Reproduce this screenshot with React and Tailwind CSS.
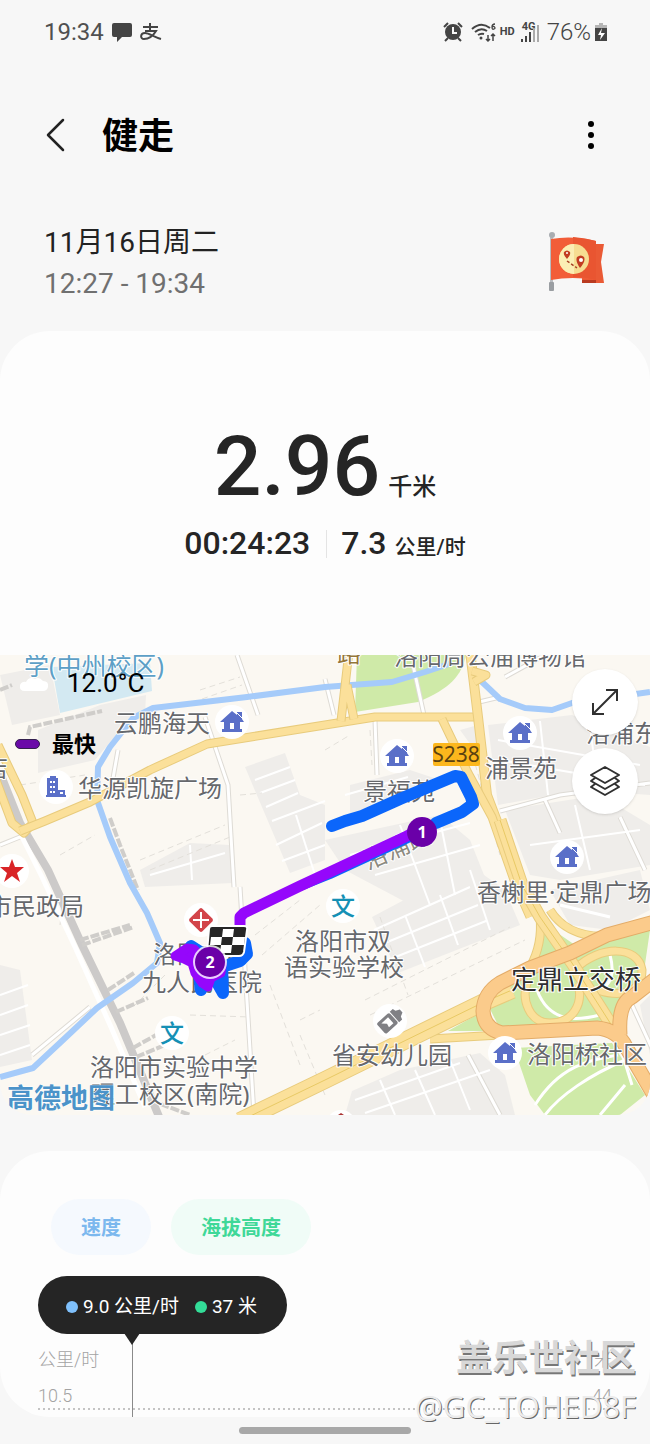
import { Fragment } from 'react';

const FONT = "font-['Roboto','Noto_Sans_CJK_SC',sans-serif]";
const MAP_FONT = "font-['Noto_Sans','Noto_Sans_CJK_SC',sans-serif]";

// points are in the map's own 650x460 space
const homes = [
  [232, 67],
  [397, 101],
  [520, 78],
  [567, 202],
  [505, 398],
];

const labels = [
  { text: '洛阳周公庙博物馆', x: 394, y: 10 },
  { text: '云鹏海天', x: 114, y: 77 },
  { text: '华源凯旋广场', x: 78, y: 142 },
  { text: '景福苑', x: 363, y: 145 },
  { text: '浦景苑', x: 485, y: 122 },
  { text: '洛浦东', x: 586, y: 87 },
  { text: '香榭里·定鼎广场', x: 477, y: 246 },
  { text: '市民政局', x: -12, y: 260 },
  { text: '洛阳市双', x: 295, y: 295 },
  { text: '语实验学校', x: 284, y: 321 },
  { text: '洛阳市第', x: 153, y: 308 },
  { text: '九人民医院', x: 142, y: 336 },
  { text: '省安幼儿园', x: 332, y: 409 },
  { text: '洛阳桥社区', x: 527, y: 408 },
  { text: '洛阳市实验中学', x: 90, y: 421 },
  { text: '理工校区(南院)', x: 91, y: 448 },
];

const roads = [
  { d: 'M-2 90 L22 140 L33 168 L24 178 L12 168 L-4 125', w: 7 },
  { d: 'M20 176 L45 166 L90 147 L150 115 L207 89 L325 70 L375 62 L478 62', w: 7 },
  { d: 'M349 -4 L341 66 M347 30 L354 64', w: 7 },
  { d: 'M470 -4 L478 62 L487 140 L506 190 L530 245', w: 8 },
  { d: 'M442 64 L468 118 L492 162 L515 228 L530 262', w: 7 },
  { d: 'M472 16 L486 20 L474 27', w: 7 },
  { d: 'M430 384 L500 380', w: 7 },
  { d: 'M528 325 C520 345 530 368 550 368 C572 368 584 350 578 328', w: 7 },
  { d: 'M575 314 C600 290 638 290 642 315 C642 340 618 342 598 335', w: 7 },
  { d: 'M540 262 C542 282 538 298 530 312', w: 7 },
  { d: 'M550 255 C564 278 590 284 618 280', w: 7 },
  { d: 'M240 466 L325 425 L392 392 L482 348 L512 335', w: 16, center: true },
  { d: 'M500 165 L522 230 L540 262 L572 308 L614 374', w: 11, center: true },
];

const highway = 'M655 267 L607 280 L570 298 L530 313 L500 328 Q484 338 483 356 Q484 374 502 378 L597 373 Q618 375 626 392 L655 442 M620 380 Q618 348 632 342 L655 324';

const streets = 'M237 0 L258 60 M205 62 L228 130 L234 232 M413 10 L424 60 M375 65 L377 120 M475 48 L500 42 M505 22 L545 0 M325 24 L334 60 M500 156 L560 140 L650 128 M545 145 L560 178 M620 162 L645 215 M110 140 L118 95 M0 190 L25 180 M240 232 L254 460 M32 400 L90 352 M468 400 L500 460 M632 350 L655 400';

const blocks = [
  'M0 20 L50 10 L60 60 L12 70 Z',
  'M38 75 L100 50 L146 40 L145 60 L112 85 L95 105 L38 118 Z',
  'M245 112 L285 98 L300 140 L325 150 L325 205 L290 218 Z',
  'M140 215 L190 188 L230 190 L233 228 L145 232 Z',
  'M460 75 L478 70 L484 108 Z',
  'M488 70 L572 60 L650 92 L650 140 L580 135 L498 150 Z',
  'M350 130 L410 115 L440 125 L350 165 Z',
  'M325 185 L440 160 L470 185 L490 235 L430 260 L345 215 Z',
  'M505 155 L600 140 L650 170 L650 210 L560 225 L530 220 Z',
  'M372 262 L470 210 L505 235 L520 270 L398 318 Z',
  'M0 310 L20 315 L32 405 L0 412 Z',
  'M352 436 L400 415 L480 398 L505 420 L515 460 L345 460 Z',
  'M550 235 L640 215 L650 255 L610 275 L570 270 Z',
  'M640 350 L650 340 V400 Z',
];

function HomePin({ x, y }) {
  return (
    <g transform={`translate(${x} ${y})`}>
      <circle r="17" fill="#fff" />
      <path d="M0 -11 L5 -7 V-10 H10 V-3 L12 0 H8 V7 H10 V10 H-10 V7 H-8 V0 H-12 Z" fill="#5a6fc8" />
      <path d="M-2 1 H2 V7 H-2 Z" fill="#fff" />
      <path d="M4 -10 L10 -4" stroke="#fff" />
    </g>
  );
}

function SchoolPin({ x, y }) {
  return (
    <g transform={`translate(${x} ${y})`}>
      <circle r="17" fill="#fff" />
      <text y="9" textAnchor="middle" className="text-2xl font-medium" fill="#1590b5">文</text>
    </g>
  );
}

function Badge({ x, y, n }) {
  return (
    <g transform={`translate(${x} ${y})`}>
      <circle r="15" fill="#6a00a8" />
      <text y="6" textAnchor="middle" className="font-['Open_Sans',sans-serif] text-base font-bold" fill="#fff">{n}</text>
    </g>
  );
}

function RouteMap() {
  return (
    <svg
      viewBox="0 0 650 460"
      preserveAspectRatio="xMidYMid slice"
      className={`block h-[460px] w-full ${MAP_FONT}`}
      role="img"
      aria-label="路线地图"
    >
      <rect width="650" height="460" fill="#fbf8f2" />

      {/* blocks and parks */}
      <path d="M52 12 L150 8 L152 36 L60 58 Z" fill="#d3e9f2" />
      {blocks.map((d) => <path key={d} d={d} fill="#efedea" />)}
      <g fill="#cfeaa8">
        <path d="M357 0 H466 C462 20 450 34 418 47 L355 57 Z" />
        <path d="M514 393 L612 388 L645 440 L620 460 H545 L530 440 Z" />
        <path d="M532 310 L546 270 L575 290 L610 280 L650 275 L642 330 L622 345 L616 370 L500 374 L488 350 Z" />
        <path d="M448 376 L480 358 L488 376 Z" />
      </g>

      {/* minor streets */}
      <path d={streets} fill="none" stroke="#dedbd5" strokeWidth="5" />
      <g fill="none" stroke="#fff" strokeWidth="3">
        <path d={streets} />
        <path d="M535 450 C560 410 590 405 618 400 M545 460 C560 440 590 420 625 405 M600 460 L625 430 M537 335 C550 370 580 365 600 360 M560 250 L610 262 M610 300 C618 330 600 340 590 330 M618 385 L632 430" />
      </g>
      <g fill="none" stroke="#fff" strokeWidth="2">
        <path d="M255 125 L290 112 M260 138 L295 125 M266 152 L298 138 M272 166 L325 146 M276 190 L322 168 M282 206 L325 190 M296 160 L315 220" />
        <path d="M150 220 L225 198 M190 190 L192 225 M345 140 L408 122 M350 200 L470 168 M375 220 L480 190 M400 170 L430 250 M440 165 L455 240" />
        <path d="M374 275 L470 232 M380 290 L478 250 M388 305 L486 266 M405 260 L425 312 M440 240 L458 290 M470 215 L490 275" />
        <path d="M498 85 L640 110 M500 105 L645 130 M540 66 L548 140 M590 72 L598 132 M530 190 L640 175 M575 150 L590 215 M355 445 L460 408 M365 458 L490 415 M380 425 L395 460 M415 415 L435 460 M450 405 L470 455" />
        <path d="M0 340 L28 330 M0 360 L28 350 M0 380 L30 370 M0 400 L30 390" />
      </g>
      <g fill="none" stroke="#e3e0da" strokeDasharray="6 4">
        <path d="M200 35 L240 22 M202 44 L242 30 M20 130 L85 120 M60 200 L95 180 M140 205 L225 170 M150 215 L230 182 M240 140 L262 138 M190 360 L250 362 M60 270 L62 250 M365 345 L510 272 M370 360 L525 285 M255 280 L300 245 M262 300 L320 250 M300 365 L320 355 M165 320 L135 350 M325 95 L350 80 M370 75 L372 110" />
        <path d="M380 262 L408 340 M470 90 L500 200 M270 330 L300 410 M205 400 L235 385 M300 380 L325 440" />
      </g>

      {/* railway with its sidings */}
      <path d="M0 118 L20 168 L48 215 L82 290 L120 368 L160 464" fill="none" stroke="#cccac9" strokeWidth="8" />
      <path d="M22 182 L42 222 L75 292 L111 372 L145 452" fill="none" stroke="#fff" strokeWidth="5" />
      <g fill="none" stroke="#cfcdca" strokeWidth="4" strokeDasharray="9 2">
        <path d="M28 80 L30 72 L102 56" />
        <path d="M110 163 L120 190 L138 235" />
        <path d="M82 290 L134 272 M80 285 L130 270" />
        <path d="M108 335 L134 318 M116 357 L148 343 M133 393 L156 380 M136 402 L165 390" />
        <path d="M0 35 L12 30 M150 445 L190 460" />
      </g>

      {/* river */}
      <g fill="none" stroke="#a5cbfa" strokeWidth="6" strokeLinejoin="round">
        <path d="M452 8 L425 17 L392 27 L325 32 L247 42 L153 53 L133 63 L110 92 L98 112 L97 145 L110 182 L130 228 L147 258 L160 288 L157 308 L133 328 L97 353 L63 385 L33 413 L0 422" />
        <path d="M481 26 L500 44 L525 53 L552 55 L572 48 L650 37" />
      </g>

      {/* main roads */}
      <g fill="none" strokeLinejoin="round">
        {roads.map(({ d, w, center }) => (
          <Fragment key={d}>
            <path d={d} stroke="#e8cb7c" strokeWidth={w + 2} />
            <path d={d} stroke="#fbe09a" strokeWidth={w} />
            {center && <path d={d} stroke="#e8c965" />}
          </Fragment>
        ))}
        <path d={highway} stroke="#e3ac68" strokeWidth="15" />
        <path d={highway} stroke="#fbcb8b" strokeWidth="13" />
      </g>

      {/* place names */}
      <g className="text-2xl" fill="#66686c" stroke="#fff" strokeWidth="2" strokeLinejoin="round" paintOrder="stroke">
        {labels.map(({ text, x, y }) => <text key={text} x={x} y={y}>{text}</text>)}
        <text x="24" y="20" className="text-[25px]" fill="#5d9fc6">学(中州校区)</text>
        <text x="337" y="7" fill="#94763a">路</text>
        <text transform="translate(368 215) rotate(-24)" fill="#8c8a80">洛浦路</text>
        <text x="-16" y="122">店</text>
      </g>
      <text x="511" y="334" className="text-[26px]" fill="#2e2e30" stroke="#fff" strokeWidth="2" paintOrder="stroke">定鼎立交桥</text>
      <rect x="433" y="88" width="47" height="23" rx="2" fill="#fcb71d" />
      <text x="456" y="107" textAnchor="middle" className="text-[21px]" fill="#5c4210">S238</text>

      {/* pins */}
      {homes.map(([x, y]) => <HomePin key={x} x={x} y={y} />)}
      <SchoolPin x={343} y={251} />
      <SchoolPin x={172} y={378} />
      <g transform="translate(56 132)">
        <circle r="17" fill="#fff" />
        <path d="M-9 -9 H-6 V-11 H0 V-9 H2 V3 H9 V8 H10 V10 H-10 V8 H-9 Z" fill="#5a6fc8" />
        <path d="M-6 -5 H-4 M-3 -5 H-1 M-6 0 H-4 M-3 0 H-1 M-6 5 H-4 M-3 5 H-1 M4 6 H7" stroke="#fff" strokeWidth="2" />
      </g>
      <g transform="translate(12 216)">
        <circle r="17" fill="#fff" />
        <path d="M0 -12 L3 -4 L12 -4 L5 2 L8 11 L0 5 L-8 11 L-5 2 L-12 -4 L-3 -4 Z" fill="#d92427" />
      </g>
      <g transform="translate(201 265)">
        <circle r="17" fill="#fff" />
        <rect x="-9" y="-9" width="18" height="18" rx="2" transform="rotate(45)" fill="#d2444a" />
        <path d="M-8 0 H8 M0 -8 V8" stroke="#fff" strokeWidth="2" />
      </g>
      <g transform="translate(390 366)">
        <circle r="17" fill="#fff" />
        <g transform="rotate(48)">
          <rect x="-7" y="-5" width="14" height="17" rx="2" fill="#808084" />
          <path d="M-7 -6 H7 V-10 L4 -11 L2 -15 H-2 L-4 -11 L-7 -10 Z" fill="#808084" />
          <path d="M-4 -1 H4 V5 L0 4 L-4 8 Z" fill="#fff" />
        </g>
      </g>
      <circle cx="341" cy="470" r="15" fill="#fff" />
      <path d="M338 460 L341 458 L344 460 Z" fill="#a33" />

      {/* recorded route, fastest part in purple */}
      <g fill="none" strokeLinecap="round" strokeLinejoin="round">
        <g stroke="#0b66fb" strokeWidth="12">
          <path d="M332 171 L345 166 L362 161 L400 144 L455 121 L461 122 L471 142 L473 149 L462 157 L436 168" />
          <path d="M410 183 L330 220 L300 232" strokeWidth="8" />
          <path d="M245 288 L247 299 L240 306 L222 312" strokeWidth="12" />
          <path d="M191 291 L205 300 M222 312 L223 338 L214 322 M199 320 L201 335" strokeWidth="12" />
        </g>
        <path d="M240 275 V262 L244 258 L300 231 L330 217 L375 196 L405 182 L416 176" stroke="#9507fb" strokeWidth="11" />
        <path d="M175 301 L181 297 L187 293 L194 294 L200 300 L222 310 L221 318 L211 323 L208 332 L202 328 L195 318 L192 308 L184 304 Z" fill="#9507fb" stroke="#9507fb" strokeWidth="9" />
      </g>
      <g transform="translate(227 286)">
        <path d="M-15 -15 H17 Q21 -15 20 -11 L17 11 Q16 15 12 15 H-18 Q-21 15 -20 11 L-18 -12 Q-18 -15 -15 -15 Z" fill="#262626" stroke="#fff" strokeWidth="2" />
        <path d="M-4 -12 H7 L6 -4 H-5 Z M-16 -4 H-5 L-6 4 H-17 Z M6 -4 H18 L17 4 H5 Z M-6 4 H5 L4 12 H-7 Z" fill="#fff" />
      </g>
      <circle cx="210" cy="307" r="17" fill="#fff" opacity="0.8" />
      <Badge x={422} y={177} n="1" />
      <Badge x={210} y={307} n="2" />

      <text x="7" y="453" className="text-[27px] font-bold" fill="#4b93c9" stroke="#fff" strokeWidth="1" paintOrder="stroke">高德地图</text>
    </svg>
  );
}

function StatusBar() {
  return (
    <div className="flex h-16 items-center justify-between pr-[43px] pl-11 text-2xl leading-6 font-light text-[#444]">
      <div className="flex items-center gap-2">
        <span className="font-normal text-[#505050]">19:34</span>
        <svg width="20" height="20" viewBox="0 0 20 20" fill="#444" aria-hidden="true">
          <path d="M2 1 H18 Q20 1 20 3 V13 Q20 15 18 15 H10 L5 20 V15 H2 Q0 15 0 13 V3 Q0 1 2 1 Z" />
        </svg>
        <svg width="22" height="18" viewBox="0 0 22 18" fill="none" stroke="#444" strokeWidth="2" aria-hidden="true">
          <path d="M3 4 H18 M10 0 V8 M5 8 H16 C13 13 8 16 4 16 C0 16 0 10 5 10 C9 10 14 14 21 16" />
        </svg>
      </div>
      <div className="flex items-center gap-1">
        <svg width="20" height="20" viewBox="0 0 20 20" fill="none" stroke="#444" strokeWidth="2" className="mr-1" aria-hidden="true">
          <circle cx="10" cy="10" r="8" fill="#444" stroke="none" />
          <path d="M1 5 L5 1 M19 5 L15 1 M5 16 L2 19 M15 16 L18 19" />
          <path d="M10 5 V11 H14" stroke="#f7f7f7" />
        </svg>
        <svg width="25" height="22" viewBox="0 0 25 22" fill="none" stroke="#444" strokeWidth="2" aria-hidden="true">
          <path d="M1 8 Q10 0 19 7 M4 11 Q10 6 16 10 M7 14 Q10 12 13 13" />
          <circle cx="10" cy="17" r="1.5" fill="#444" stroke="none" />
          <path d="M17 14 V20 M15 18 L17 20 L19 18 M22 20 V13 M20 15 L22 13 L24 15" strokeWidth="1.5" />
          <path d="M24 3 Q21 3 21 6 Q21 9 23 8 Q25 7 23 5.5 Q22 5 21 6.5" strokeWidth="1.3" />
        </svg>
        <span className="text-[11px] font-bold">HD</span>
        <div className="grid w-5 justify-items-center">
          <span className="text-[11px] leading-[10px] font-bold">4G</span>
          <svg width="18" height="10" viewBox="0 0 18 10" className="overflow-visible" aria-hidden="true">
            <path d="M2 10 V7 M6 10 V4 M10 10 V0" stroke="#444" strokeWidth="2" />
            <path d="M14 10 V-4 M18 10 V-7" stroke="#aaa" strokeWidth="2" />
          </svg>
        </div>
        <span className="ml-1">76%</span>
        <svg width="12" height="20" viewBox="0 0 12 20" aria-hidden="true">
          <path d="M4 1 H8 V3 H12 V7 H0 V3 H4 Z" fill="#b5b5b5" />
          <path d="M0 6 H12 V19 H0 Z" fill="#444" />
          <path d="M7 6 L3 13 H6 L5 18 L10 11 H6 Z" fill="#fff" />
        </svg>
      </div>
    </div>
  );
}

function FlagIcon() {
  return (
    <svg width="60" height="62" viewBox="0 0 60 62" aria-hidden="true">
      <path d="M46 14 H58 L55 32 L58 53 H36 V46 Z" fill="#ea5a35" />
      <path d="M36 50 H50 V53 H36 Z" fill="#b93a20" />
      <rect x="4" y="6" width="3" height="54" fill="#b9bcc0" />
      <circle cx="6" cy="5" r="3" fill="#a9adb1" />
      <rect x="3" y="52" width="5" height="9" rx="1" fill="#9a9ea2" />
      <path d="M5 9 Q26 5 50 11 V50 Q26 46 5 50 Z" fill="#f25d38" />
      <path d="M27 7 Q40 8 50 11 V50 Q38 47 27 47 Z" fill="#e95531" />
      <circle cx="28" cy="29" r="15" fill="#f6dd92" />
      <path d="M28 14 A15 15 0 0 0 28 44 Z" fill="#fbeeb4" />
      <path d="M21 29 Q17 25 18 22 Q21 19 24 22 Q25 25 21 29 Z M34 38 Q29 31 31 27 Q35 24 38 27 Q40 31 34 38 Z" fill="#c23c22" />
      <circle cx="21" cy="23" r="1" fill="#fff" />
      <circle cx="35" cy="30" r="2" fill="#fff" />
      <path d="M21 31 L31 38" stroke="#a84024" strokeWidth="1.5" strokeDasharray="3 2" />
    </svg>
  );
}

function Summary() {
  return (
    <section className="flex h-[324px] flex-col items-center rounded-t-[50px] bg-[#fdfdfd] pt-[90px] font-medium text-[#252525]">
      <p className="flex items-baseline gap-2">
        <span className="text-[84px] leading-[92px]">2.96</span>
        <span className="text-2xl">千米</span>
      </p>
      <div className="mt-2 flex items-baseline text-[32px] leading-[44px]">
        <span>00:24:23</span>
        <span className="mr-[14px] ml-4 h-7 w-px translate-y-1 bg-[#e4e4e4]" />
        <span>7.3</span>
        <span className="ml-2 text-[21px]">公里/时</span>
      </div>
    </section>
  );
}

function MapPanel() {
  const round = 'flex size-[66px] items-center justify-center rounded-full bg-white shadow-sm';
  return (
    <section className="relative overflow-hidden rounded-b-[32px]">
      <RouteMap />
      <div className="absolute top-3 left-[15px] flex flex-col gap-5 text-black">
        <div className="flex h-8 items-center gap-[18px]">
          <svg width="34" height="22" viewBox="0 0 34 22" fill="#fff" aria-hidden="true">
            <path d="M10 19 Q4 19 5 13 Q7 9 11 10 Q14 4 20 7 Q24 4 28 9 Q34 9 33 15 Q32 19 28 19 Z" />
          </svg>
          <span className="text-[26px]">12.0°C</span>
        </div>
        <div className="flex h-[50px] items-center gap-3">
          <span className="h-[10px] w-[25px] rounded-full border border-[#33204d] bg-[#6a0aa8]" />
          <span className="text-[22px] font-bold">最快</span>
        </div>
      </div>
      <div className="absolute top-[14px] right-3 flex flex-col gap-[13px]">
        <button type="button" className={round} aria-label="展开地图">
          <svg width="28" height="28" viewBox="0 0 28 28" fill="none" stroke="#303030" strokeWidth="2" aria-hidden="true">
            <path d="M2 26 L26 2 M15 2 H26 V13 M2 15 V26 H13" />
          </svg>
        </button>
        <button type="button" className={round} aria-label="图层">
          <svg width="32" height="32" viewBox="0 0 32 32" fill="none" stroke="#303030" strokeWidth="2" strokeLinejoin="round" aria-hidden="true">
            <path d="M16 2 L30 10 L16 18 L2 10 Z M6 13 L2 16 L16 24 L30 16 L26 13 M6 19 L2 22 L16 30 L30 22 L26 19" />
          </svg>
        </button>
      </div>
    </section>
  );
}

function ChartCard() {
  return (
    <section className="mt-9 h-[266px] rounded-[50px] bg-[#fdfdfd] px-[38px] pt-[48px]">
      <div className="flex gap-5 pl-[13px] text-xl font-bold">
        <button type="button" className="h-14 rounded-full bg-[#f5f9fe] px-[30px] pt-[2px] text-[#7cb8ee]">速度</button>
        <button type="button" className="h-14 rounded-full bg-[#f0fcf7] px-[30px] pt-[2px] text-[#3fd898]">海拔高度</button>
      </div>
      <div className="relative mt-[21px] flex h-[58px] w-[249px] items-center rounded-full bg-[#252525] pt-1 pl-7 text-[19px] text-white">
        <span className="mr-[5px] size-3 rounded-full bg-[#7fc0fb]" />
        9.0 公里/时
        <span className="mr-[5px] ml-4 size-3 rounded-full bg-[#33dd98]" />
        37 米
        <div className="absolute top-[57px] left-[94px] h-[84px] w-px bg-[#8a8a8a]" />
        <svg width="16" height="12" viewBox="0 0 16 12" className="absolute top-[57px] left-[86px]" aria-hidden="true">
          <path d="M0 0 H16 L8 12 Z" fill="#252525" />
        </svg>
      </div>
      <div className="flex justify-between pt-2 text-lg leading-9 font-light text-[#a3a3a3]">
        <div>
          <p>公里/时</p>
          <p>10.5</p>
        </div>
        <div className="text-right">
          <p>米</p>
          <p>44</p>
        </div>
      </div>
      <svg width="100%" height="2" className="-mt-[6px] block" aria-hidden="true">
        <line x1="0" x2="100%" y1="1" y2="1" stroke="#c4c4c4" strokeWidth="2" strokeDasharray="2 3" />
      </svg>
    </section>
  );
}

export default function App() {
  return (
    <div className={`relative bg-[#f7f7f7] ${FONT}`}>
      <StatusBar />
      <header className="flex h-[142px] items-center pr-[50px] pl-[46px]">
        <button type="button" aria-label="返回">
          <svg width="20" height="34" viewBox="0 0 20 34" fill="none" stroke="#222" strokeWidth="2.5" strokeLinecap="round" strokeLinejoin="round" aria-hidden="true">
            <path d="M17 2 L2 17 L17 32" />
          </svg>
        </button>
        <h1 className="ml-9 pt-1 text-4xl font-bold text-black">健走</h1>
        <button type="button" className="ml-auto" aria-label="更多">
          <svg width="18" height="30" viewBox="0 0 18 30" aria-hidden="true">
            <circle cx="9" cy="4" r="3" />
            <circle cx="9" cy="15" r="3" />
            <circle cx="9" cy="26" r="3" />
          </svg>
        </button>
      </header>
      <div className="flex h-[125px] items-start justify-between pt-4 pr-11 pl-11">
        <div className="text-[28px] leading-[41px]">
          <p className="text-[#222]">11月16日周二</p>
          <p className="text-[#707070]">12:27 - 19:34</p>
        </div>
        <div className="mt-2">
          <FlagIcon />
        </div>
      </div>
      <main>
        <Summary />
        <MapPanel />
        <ChartCard />
      </main>
      <div className="flex h-[27px] items-center justify-center">
        <div className="h-[7px] w-[172px] rounded-full bg-[#a8a8a8]" />
      </div>
      <div className="absolute right-[14px] bottom-[14px] text-right">
        <p className="text-4xl leading-[46px] font-bold text-[#d8d8d8] [text-shadow:1px_2px_0_#777]">盖乐世社区</p>
        <p className="text-[31px] leading-[48px] text-[#ececec] font-['Open_Sans',sans-serif] [text-shadow:1px_1px_0_#666]">@GC_TOHED8F</p>
      </div>
    </div>
  );
}
